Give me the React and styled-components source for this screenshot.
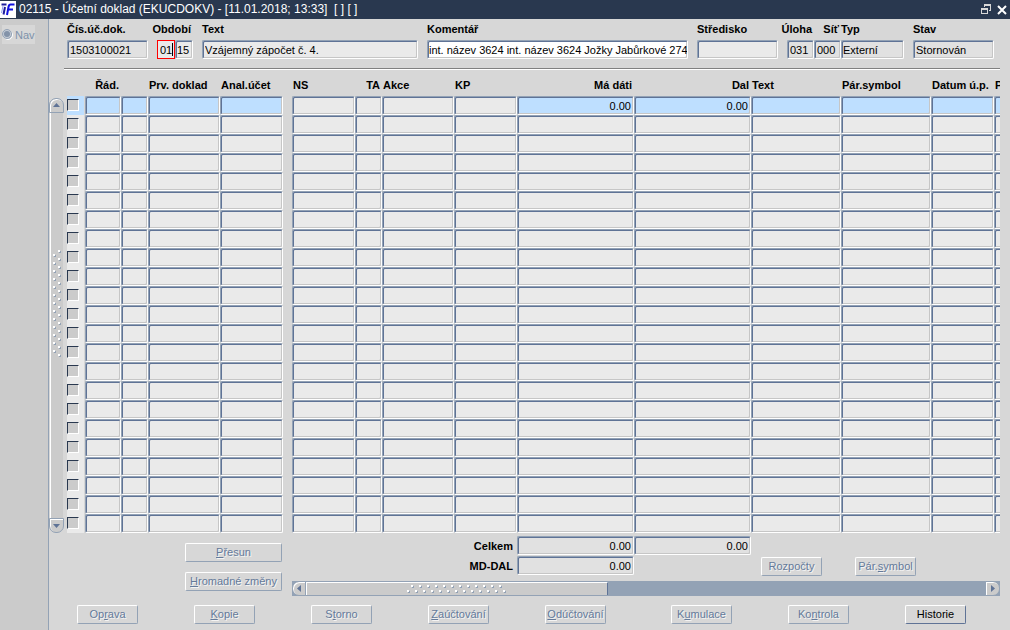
// App.jsx
import React from 'react';
import styled, { createGlobalStyle, css, ThemeProvider } from 'styled-components';

const theme = {
  colors: {
    title: '#29384f',
    page: '#d7d7d7',
    side: '#cbcbcb',
    cell: '#eaeaea',
    readOnly: '#e1e1e1',
    current: '#bedfff',
    line: '#93a2b5',
    dark: '#5f7396',
    disabled: '#647a9a',
  },
};

const GlobalStyle = createGlobalStyle`
  * {
    box-sizing: border-box;
  }

  body {
    margin: 0;
    background: #d7d7d7;
    font-family: 'Liberation Sans', Arial, sans-serif;
    font-size: 11px;
    color: #000;
  }

  input, button {
    font: inherit;
    color: inherit;
  }
`;

const Window = styled.div`
  display: flex;
  flex-direction: column;
  min-height: 100vh;
  overflow: hidden;
`;

const TitleBar = styled.header`
  display: flex;
  align-items: center;
  height: 19px;
  background: ${({ theme }) => theme.colors.title};
  color: #fff;

  h1 {
    flex: 1;
    margin: 0 0 0 3px;
    font-size: 12px;
    font-weight: 400;
    line-height: 17px;
    white-space: pre;
  }
`;

const TitleButton = styled.button`
  display: flex;
  align-items: center;
  justify-content: center;
  width: 16px;
  height: 16px;
  padding: 0;
  border: 0;
  background: none;
`;

const Body = styled.div`
  display: flex;
  flex: 1;
`;

const Sidebar = styled.nav`
  flex: none;
  width: 49px;
  padding: 6px 0 0 2px;
  background: ${({ theme }) => theme.colors.side};
  border-right: 1px solid ${({ theme }) => theme.colors.line};
`;

const NavButton = styled.button`
  display: flex;
  align-items: center;
  gap: 2px;
  height: 19px;
  padding: 0;
  border: 0;
  background: ${({ theme }) => theme.colors.page};
  color: #7d92ab;
`;

const Main = styled.main`
  flex: 1;
  min-width: 0;
  background: ${({ theme }) => theme.colors.page};
`;

const HeaderForm = styled.form`
  display: grid;
  grid-template-columns: 81px 36px minmax(0, 216fr) minmax(0, 261fr) 81px 117px 81px;
  gap: 9px;
  margin: 0 16px 9px 18px;
`;

const Group = styled.div`
  display: flex;
`;

const Field = styled.div`
  flex: ${({ $width }) => ($width ? `0 0 ${$width}` : '1')};
  min-width: 0;
`;

const Label = styled.label`
  display: flex;
  justify-content: ${({ $right }) => ($right ? 'flex-end' : 'flex-start')};
  height: 21px;
  padding-right: 2px;
  font-weight: 700;
  line-height: 21px;
  white-space: nowrap;
`;

const bevel = css`
  border: 1px solid;
  border-color: ${({ theme }) => `${theme.colors.line} #fff #fff ${theme.colors.line}`};
  border-radius: 2px;
  box-shadow: inset 1px 1px 0 ${({ theme }) => theme.colors.dark}, inset -1px -1px 0 #c6c6c6;
`;

const TextInput = styled.input`
  ${bevel}
  display: block;
  width: 100%;
  height: 19px;
  padding: ${({ $right }) => ($right ? '1px 2px 0 0' : '1px 0 0 2px')};
  outline: 0;
  text-align: ${({ $right }) => ($right ? 'right' : 'left')};
  background: ${({ theme, $tone = 'cell' }) => ($tone === 'white' ? '#fff' : theme.colors[$tone])};

  ${({ $tight }) => $tight && 'padding-left: 1px;'}

  ${({ $active }) =>
    $active &&
    css`
      border-color: #f00;
      border-radius: 0;
      box-shadow: none;
    `}
`;

const CaretBox = styled.div`
  position: relative;
  width: 18px;

  &::after {
    content: '';
    position: absolute;
    top: 3px;
    right: 2px;
    width: 1px;
    height: 13px;
    background: #000;
  }
`;

const Divider = styled.hr`
  height: 2px;
  margin: 0 10px 0 15px;
  border: 0;
  border-top: 1px solid #808080;
  background: #fff;
`;

const Records = styled.section`
  display: flex;
  gap: 3px;
  margin-right: 10px;
`;

const VerticalScroll = styled.div`
  display: flex;
  flex: none;
  flex-direction: column;
  width: 15px;
  margin-top: 28px;
`;

const VerticalThumb = styled.div`
  display: flex;
  flex: 1;
  align-items: center;
  justify-content: center;
  margin: 0 1px;
  padding-bottom: 24px;
  border-left: 1px solid #fff;
  background: ${({ theme }) => theme.colors.side};
`;

const ArrowButton = styled.button`
  display: flex;
  flex: none;
  align-items: center;
  justify-content: center;
  width: ${({ $wide }) => ($wide ? '15px' : '14px')};
  height: 15px;
  padding: 0;
  border: 1px solid ${({ theme }) => theme.colors.line};
  border-radius: ${({ $round }) => $round};
  background: ${({ theme }) => theme.colors.side};
  box-shadow: inset 1px 1px 0 #fff;
  color: ${({ theme }) => theme.colors.dark};
`;

const TableClip = styled.div`
  flex: 1;
  min-width: 0;
  overflow: hidden;
`;

const Table = styled.table`
  width: 990px;
  table-layout: fixed;
  border-collapse: separate;
  border-spacing: 0;

  th {
    height: 26px;
    padding: 4px 2px 0 1px;
    font-weight: 700;
    white-space: nowrap;
  }

  td {
    height: 19px;
    padding: 0;
  }
`;

const HeadCell = styled.th`
  text-align: ${({ $right }) => ($right ? 'right' : 'left')};
`;

const CheckCell = styled.td`
  border-right: 1px solid ${({ theme }) => theme.colors.page};
  background: ${({ theme, $current }) => ($current ? theme.colors.current : theme.colors.cell)};
`;

const Check = styled.input`
  display: block;
  appearance: none;
  width: 12px;
  height: 12px;
  margin: 0 0 1px;
  border: 1px solid;
  border-color: ${({ theme }) => `${theme.colors.title} #fff #fff ${theme.colors.title}`};
  background: ${({ theme }) => theme.colors.side};
`;

const Summary = styled.section`
  display: flex;
  margin-right: 10px;
`;

const RowActions = styled.div`
  display: flex;
  flex: none;
  flex-direction: column;
  gap: 10px;
  width: 243px;
  padding: 10px 10px 0 136px;
`;

const SummaryMain = styled.div`
  flex: 1;
  min-width: 0;
`;

const TotalsRow = styled.div`
  display: flex;
  height: 48px;
`;

const Totals = styled.div`
  display: grid;
  grid-template-columns: 225px 117px 117px;
  grid-auto-rows: 19px;
  row-gap: 1px;
  padding-top: 3px;

  label {
    height: 19px;
    padding-right: 4px;
    line-height: 20px;
  }
`;

const SideActions = styled.div`
  display: flex;
  gap: 33px;
  padding: 24px 0 0 10px;
`;

const Button = styled.button`
  width: ${({ $wide }) => ($wide ? '97px' : '61px')};
  height: 19px;
  padding: 0;
  border: 1px solid;
  border-color: ${({ theme }) => `#fff ${theme.colors.line} ${theme.colors.line} #fff`};
  border-radius: 2px;
  background: ${({ theme }) => theme.colors.page};
  line-height: 17px;
  white-space: nowrap;

  &:disabled {
    color: ${({ theme }) => theme.colors.disabled};
    text-shadow: 1px 1px 0 #f4f4f4;
  }

  &:enabled {
    border-right-color: ${({ theme }) => theme.colors.dark};
    border-bottom-color: ${({ theme }) => theme.colors.dark};
  }
`;

const HorizontalScroll = styled.div`
  display: flex;
  justify-content: space-between;
  height: 15px;
  background: ${({ theme }) => theme.colors.line};
`;

const HorizontalTrack = styled.div`
  display: grid;
  flex: 1;
  grid-template-columns: 4fr 5fr;
`;

const HorizontalThumb = styled.div`
  display: flex;
  align-items: center;
  justify-content: center;
  height: 13px;
  margin-top: 1px;
  border-top: 1px solid #fff;
  border-left: 1px solid #fff;
  border-right: 1px solid ${({ theme }) => theme.colors.dark};
  background: ${({ theme }) => theme.colors.side};
`;

const Footer = styled.footer`
  display: flex;
  justify-content: space-between;
  padding: 9px 44px 6px 28px;
`;

const FooterGroup = styled.div`
  display: flex;
  gap: 56px;
`;

const columns = [
  { key: 'rad', label: 'Řád.', width: 36, right: true, current: true },
  { key: 'radTyp', label: '', width: 27, current: true },
  { key: 'prvDoklad', label: 'Prv. doklad', width: 72, current: true },
  { key: 'analUcet', label: 'Anal.účet', width: 63, current: true },
  { key: 'gap', width: 9, spacer: true },
  { key: 'ns', label: 'NS', width: 63 },
  { key: 'ta', label: 'TA', width: 27, right: true },
  { key: 'akce', label: 'Akce', width: 72 },
  { key: 'kp', label: 'KP', width: 63 },
  { key: 'maDati', label: 'Má dáti', width: 117, right: true, current: true },
  { key: 'dal', label: 'Dal', width: 117, right: true, current: true },
  { key: 'text', label: 'Text', width: 90, current: true },
  { key: 'parSymbol', label: 'Pár.symbol', width: 90, current: true },
  { key: 'datum', label: 'Datum ú.p.', width: 63, current: true },
  { key: 'last', label: 'P', width: 63, current: true },
];

const rows = Array.from({ length: 23 }, (_, i) => (i === 0 ? { maDati: '0.00', dal: '0.00' } : {}));

const leftActions = [
  { text: 'Oprava', hot: 2 },
  { text: 'Kopie', hot: 0 },
  { text: 'Storno', hot: 1 },
  { text: 'Zaúčtování', hot: 0 },
  { text: 'Odúčtování', hot: 0 },
];

const rightActions = [
  { text: 'Kumulace', hot: 1 },
  { text: 'Kontrola', hot: 2 },
  { text: 'Historie', enabled: true },
];

const ActionButton = ({ text, hot, enabled, wide }) => (
  <Button type="button" disabled={!enabled} $wide={wide}>
    {hot === undefined ? text : (
      <>
        {text.slice(0, hot)}
        <u>{text[hot]}</u>
        {text.slice(hot + 1)}
      </>
    )}
  </Button>
);

const LabeledInput = ({ id, label, width, labelRight, tone, tight, value = '' }) => (
  <Field $width={width}>
    <Label htmlFor={id} $right={labelRight}>{label}</Label>
    <TextInput id={id} $tone={tone} $tight={tight} defaultValue={value} />
  </Field>
);

const Arrow = ({ points }) => (
  <svg width="7" height="7" viewBox="0 0 7 7" aria-hidden="true">
    <polygon points={points} fill="currentColor" />
  </svg>
);

const Grip = ({ vertical }) => {
  const dots = Array.from({ length: vertical ? 27 : 25 }, (_, i) => {
    const along = i * 4;
    const across = i % 2 ? 0 : 5;
    return vertical ? [across, along] : [along, across];
  });

  return (
    <svg
      width={vertical ? 8 : 99}
      height={vertical ? 107 : 8}
      shapeRendering="crispEdges"
      aria-hidden="true"
    >
      {dots.map(([x, y]) => (
        <g key={`${x}-${y}`}>
          <rect x={x + 1} y={y + 1} width="2" height="2" fill="#93a2b5" />
          <rect x={x} y={y} width="2" height="2" fill="#fff" />
        </g>
      ))}
    </svg>
  );
};

const Logo = () => (
  <svg width="16" height="17" viewBox="0 0 16 17" aria-hidden="true">
    <rect width="16" height="17" fill="#fff" />
    <path d="M1.500 3.500h5M5 6l-1.500 7.500" fill="none" stroke="#1c1c9c" strokeWidth="2" />
    <path d="M14.500 3.500h-4Q9 3.500 8.500 6L7 14M8 8.500h5" fill="none" stroke="#1010e0" strokeWidth="2" />
    <path d="M3 5L1.500 12" fill="none" stroke="#8c9cf0" />
  </svg>
);

export default function App() {
  return (
    <ThemeProvider theme={theme}>
      <GlobalStyle />
      <Window>
        <TitleBar>
          <Logo />
          <h1>02115 - Účetní doklad (EKUCDOKV) - [11.01.2018; 13:33]  [ ] [ ]</h1>
          <TitleButton type="button" aria-label="Obnovit">
            <svg width="10" height="11" shapeRendering="crispEdges" aria-hidden="true">
              <path d="M3 0h7v7h-2v-1h1v-4h-5v1h-1z" fill="#d8d8d8" />
              <path d="M0 4h7v6h-7zM1 6v3h5v-3z" fill="#d8d8d8" fillRule="evenodd" />
            </svg>
          </TitleButton>
          <TitleButton type="button" aria-label="Zavřít">
            <svg width="10" height="10" aria-hidden="true">
              <path d="M1 1l8 8M9 1l-8 8" stroke="#fff" strokeWidth="2" />
            </svg>
          </TitleButton>
        </TitleBar>

        <Body>
          <Sidebar>
            <NavButton type="button" disabled>
              <svg width="11" height="11" aria-hidden="true">
                <circle cx="6" cy="6" r="4.500" fill="#c4ccd6" stroke="#fff" />
                <circle cx="5" cy="5" r="4.500" fill="#c4ccd6" stroke="#93a2b5" />
                <circle cx="5" cy="5" r="3" fill="#8393a9" />
              </svg>
              Nav
            </NavButton>
          </Sidebar>

          <Main>
            <HeaderForm>
              <LabeledInput id="cislo" label="Čís.úč.dok." tone="readOnly" value="1503100021" />
              <Field>
                <Label htmlFor="mesic" $right>Období</Label>
                <Group>
                  <CaretBox>
                    <TextInput id="mesic" $active defaultValue="01" />
                  </CaretBox>
                  <Field>
                    <TextInput aria-label="Rok" $tight defaultValue="15" />
                  </Field>
                </Group>
              </Field>
              <LabeledInput id="text" label="Text" value="Vzájemný zápočet č. 4." />
              <LabeledInput
                id="komentar"
                label="Komentář"
                tone="white"
                tight
                value="int. název 3624 int. název 3624 Jožky Jabůrkové 274"
              />
              <LabeledInput id="stredisko" label="Středisko" />
              <Group>
                <LabeledInput id="uloha" label="Úloha" width="27px" labelRight tone="readOnly" value="031" />
                <LabeledInput id="sit" label="Síť" width="27px" labelRight tone="readOnly" value="000" />
                <LabeledInput id="typ" label="Typ" tone="readOnly" tight value="Externí" />
              </Group>
              <LabeledInput id="stav" label="Stav" tone="readOnly" value="Stornován" />
            </HeaderForm>

            <Divider />

            <Records>
              <VerticalScroll>
                <ArrowButton type="button" aria-label="Nahoru" $wide $round="7px 7px 0 0">
                  <Arrow points="0,5 3.500,1 7,5" />
                </ArrowButton>
                <VerticalThumb>
                  <Grip vertical />
                </VerticalThumb>
                <ArrowButton type="button" aria-label="Dolů" $wide $round="0 0 7px 7px">
                  <Arrow points="0,2 7,2 3.500,6" />
                </ArrowButton>
              </VerticalScroll>

              <TableClip>
                <Table>
                  <colgroup>
                    <col width="18" />
                    {columns.map((c) => (
                      <col key={c.key} width={c.width} />
                    ))}
                  </colgroup>
                  <thead>
                    <tr>
                      <th aria-label="Výběr" />
                      {columns.map((c) => (
                        <HeadCell key={c.key} $right={c.right}>{c.label}</HeadCell>
                      ))}
                    </tr>
                  </thead>
                  <tbody>
                    {rows.map((row, i) => (
                      <tr key={i}>
                        <CheckCell $current={i === 0}>
                          <Check type="checkbox" aria-label={`Řádek ${i + 1}`} />
                        </CheckCell>
                        {columns.map((c) => (
                          <td key={c.key}>
                            {!c.spacer && (
                              <TextInput
                                aria-label={c.label || 'Typ řádku'}
                                $right={c.right}
                                $tone={i === 0 && c.current ? 'current' : 'cell'}
                                defaultValue={row[c.key] || ''}
                              />
                            )}
                          </td>
                        ))}
                      </tr>
                    ))}
                  </tbody>
                </Table>
              </TableClip>
            </Records>

            <Summary>
              <RowActions>
                <ActionButton text="Přesun" hot={0} wide />
                <ActionButton text="Hromadné změny" hot={0} wide />
              </RowActions>
              <SummaryMain>
                <TotalsRow>
                  <Totals>
                    <Label htmlFor="celkemMd" $right>Celkem</Label>
                    <TextInput id="celkemMd" $right $tone="readOnly" defaultValue="0.00" />
                    <TextInput aria-label="Celkem Dal" $right $tone="readOnly" defaultValue="0.00" />
                    <Label htmlFor="rozdil" $right>MD-DAL</Label>
                    <TextInput id="rozdil" $right $tone="readOnly" defaultValue="0.00" />
                  </Totals>
                  <SideActions>
                    <ActionButton text="Rozpočty" />
                    <ActionButton text="Pár.symbol" hot={4} />
                  </SideActions>
                </TotalsRow>
                <HorizontalScroll>
                  <ArrowButton type="button" aria-label="Doleva" $round="7px 0 0 7px">
                    <Arrow points="5,0 5,7 1,3.500" />
                  </ArrowButton>
                  <HorizontalTrack>
                    <HorizontalThumb>
                      <Grip />
                    </HorizontalThumb>
                  </HorizontalTrack>
                  <ArrowButton type="button" aria-label="Doprava" $wide $round="0 7px 7px 0">
                    <Arrow points="2,0 6,3.500 2,7" />
                  </ArrowButton>
                </HorizontalScroll>
              </SummaryMain>
            </Summary>

            <Footer>
              <FooterGroup>
                {leftActions.map((a) => (
                  <ActionButton key={a.text} {...a} />
                ))}
              </FooterGroup>
              <FooterGroup>
                {rightActions.map((a) => (
                  <ActionButton key={a.text} {...a} />
                ))}
              </FooterGroup>
            </Footer>
          </Main>
        </Body>
      </Window>
    </ThemeProvider>
  );
}
